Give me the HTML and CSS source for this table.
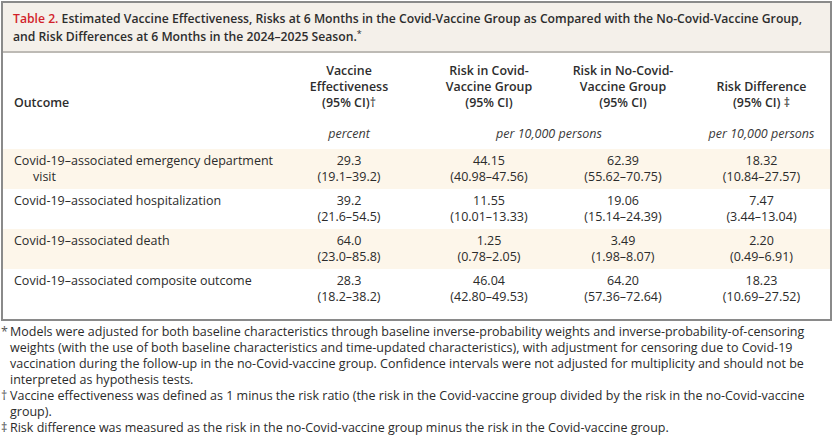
FILE: index.html
```html
<!DOCTYPE html>
<html lang="en">
<head>
<meta charset="utf-8">
<title>Table 2</title>
<link rel="stylesheet" href="styles.css">
</head>
<body>
<div class="frame">
  <div class="caption"><span class="label">Table 2.</span> Estimated Vaccine Effectiveness, Risks at 6 Months in the Covid-Vaccine Group as Compared with the No-Covid-Vaccine Group, and Risk Differences at 6 Months in the 2024–2025 Season.<sup class="star">*</sup></div>
  <table class="data">
    <colgroup>
      <col class="c1"><col class="c2"><col class="c3"><col class="c4"><col class="c5">
    </colgroup>
    <thead>
      <tr class="heads">
        <th class="outcome">Outcome</th>
        <th>Vaccine<br>Effectiveness<br>(95% CI)<span class="mark">†</span></th>
        <th>Risk in Covid-<br>Vaccine Group<br>(95% CI)</th>
        <th>Risk in No-Covid-<br>Vaccine Group<br>(95% CI)</th>
        <th class="last">Risk Difference<br>(95% CI) <span class="mark">‡</span></th>
      </tr>
      <tr class="units">
        <td></td>
        <td>percent</td>
        <td colspan="2">per 10,000 persons</td>
        <td class="last">per 10,000 persons</td>
      </tr>
    </thead>
    <tbody>
      <tr class="shade">
        <td class="name">Covid-19–associated emergency department visit</td>
        <td>29.3<br>(19.1–39.2)</td>
        <td>44.15<br>(40.98–47.56)</td>
        <td>62.39<br>(55.62–70.75)</td>
        <td class="last">18.32<br>(10.84–27.57)</td>
      </tr>
      <tr>
        <td class="name">Covid-19–associated hospitalization</td>
        <td>39.2<br>(21.6–54.5)</td>
        <td>11.55<br>(10.01–13.33)</td>
        <td>19.06<br>(15.14–24.39)</td>
        <td class="last">7.47<br>(3.44–13.04)</td>
      </tr>
      <tr class="shade">
        <td class="name">Covid-19–associated death</td>
        <td>64.0<br>(23.0–85.8)</td>
        <td>1.25<br>(0.78–2.05)</td>
        <td>3.49<br>(1.98–8.07)</td>
        <td class="last">2.20<br>(0.49–6.91)</td>
      </tr>
      <tr>
        <td class="name">Covid-19–associated composite outcome</td>
        <td>28.3<br>(18.2–38.2)</td>
        <td>46.04<br>(42.80–49.53)</td>
        <td>64.20<br>(57.36–72.64)</td>
        <td class="last">18.23<br>(10.69–27.52)</td>
      </tr>
    </tbody>
  </table>
</div>
<div class="notes">
  <p class="note"><span class="sym">*</span>Models were adjusted for both baseline characteristics through baseline inverse-probability weights and inverse-probability-of-censoring weights (with the use of both baseline characteristics and time-updated characteristics), with adjustment for censoring due to Covid-19 vaccination during the follow-up in the no-Covid-vaccine group. Confidence intervals were not adjusted for multiplicity and should not be interpreted as hypothesis tests.</p>
  <p class="note"><span class="sym">†</span>Vaccine effectiveness was defined as 1 minus the risk ratio (the risk in the Covid-vaccine group divided by the risk in the no-Covid-vaccine group).</p>
  <p class="note"><span class="sym">‡</span>Risk difference was measured as the risk in the no-Covid-vaccine group minus the risk in the Covid-vaccine group.</p>
</div>
</body>
</html>
```

FILE: styles.css
```css
html, body {
  margin: 0;
  padding: 0;
  background: #ffffff;
}

body {
  font-family: "Open Sans", "Lato", sans-serif;
  color: #2b2b2b;
  width: 835px;
}

.frame {
  margin: 1px 3px 0 1px;
  border: 2px solid #8a8a8a;
  padding-bottom: 10px;
}

.caption {
  background: #f4f0ea;
  border-bottom: 2px solid #bdbab5;
  padding: 7px 10px 5px 10px;
  font-size: 12.2px;
  line-height: 18px;
  font-weight: 600;
  color: #2d2d2d;
}

.caption .label {
  color: #d21f2b;
}

.caption .star {
  font-size: 9px;
  vertical-align: 4px;
  line-height: 0;
  font-weight: 400;
}

.data {
  border-collapse: collapse;
  table-layout: fixed;
  width: 827px;
  font-size: 12.5px;
  line-height: 16px;
}

.c1 { width: 280px; }
.c2 { width: 132px; }
.c3 { width: 148px; }
.c4 { width: 120px; }
.c5 { width: 147px; }

.data th,
.data td {
  padding: 0;
  text-align: center;
}

.data .last {
  padding-left: 10px;
}

.data .heads th {
  font-weight: 600;
  font-size: 12.4px;
  vertical-align: bottom;
  padding-top: 10px;
  color: #2d2d2d;
}

.data .heads th.outcome {
  text-align: left;
  padding-left: 11px;
}

.mark {
  font-weight: 400;
}

.data .units td {
  font-style: italic;
  padding-top: 15px;
  padding-bottom: 7px;
  color: #3a3a3a;
}

.data tbody td {
  vertical-align: top;
  padding-top: 4px;
  padding-bottom: 4px;
}

.data tbody td.last {
  padding-left: 10px;
}

.data tbody td.name {
  text-align: left;
  padding-left: 30px;
  text-indent: -19px;
}

.data tbody tr.shade {
  background: #fdf6ea;
}

.notes {
  margin: 3px 3px 0 1px;
  font-size: 12.5px;
  line-height: 16px;
  color: #2b2b2b;
}

.note {
  margin: 0;
  padding-left: 9px;
  text-indent: -9px;
}

.note .sym {
  display: inline-block;
  width: 9px;
  text-indent: 0;
  color: #555;
}
```
